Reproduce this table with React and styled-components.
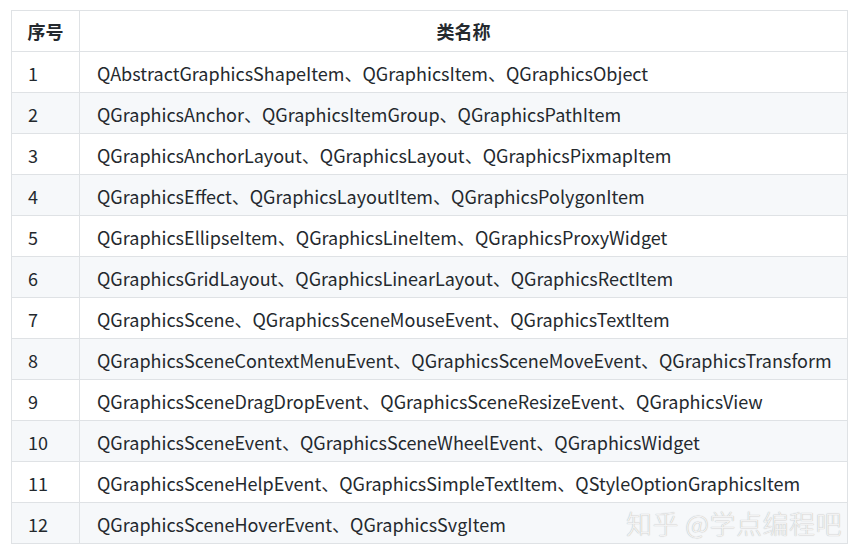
import React from "react";
import styled, { createGlobalStyle } from "styled-components";

const Global = createGlobalStyle`
  html, body { margin: 0; padding: 0; background: #fff; }
  body { font-family: "Noto Sans CJK SC", "Noto Sans", sans-serif; }
`;

const Page = styled.div`
  position: relative;
  width: 864px;
  height: 555px;
  padding: 10px 16px 0 11px;
  box-sizing: border-box;
`;

const Table = styled.table`
  border-collapse: collapse;
  table-layout: fixed;
  width: 837px;
  color: #24292e;
  font-size: 18px;
`;

const Col = styled.col`
  width: ${(p) => p.$w};
`;

const Th = styled.th`
  height: 41px;
  box-sizing: border-box;
  border: 1px solid #dfe2e5;
  font-weight: 700;
  text-align: center;
  padding: 0;
  white-space: nowrap;
`;

const Row = styled.tr`
  background: ${(p) => (p.$alt ? "#f6f8fa" : "#fff")};
`;

const Td = styled.td`
  height: 41px;
  box-sizing: border-box;
  border: 1px solid #dfe2e5;
  padding: 1px 0 0 ${(p) => (p.$num ? "16px" : "17px")};
  white-space: nowrap;
  overflow: visible;
`;

const Watermark = styled.div`
  position: absolute;
  right: 22px;
  bottom: 14px;
  font-size: 26px;
  font-weight: 300;
  letter-spacing: 0.5px;
  color: #f2f2f2;
  font-family: "Noto Sans CJK SC", sans-serif;
  text-shadow: 0 0 1px #a8a8a8;
`;

const rows = [
  "QAbstractGraphicsShapeItem、QGraphicsItem、QGraphicsObject",
  "QGraphicsAnchor、QGraphicsItemGroup、QGraphicsPathItem",
  "QGraphicsAnchorLayout、QGraphicsLayout、QGraphicsPixmapItem",
  "QGraphicsEffect、QGraphicsLayoutItem、QGraphicsPolygonItem",
  "QGraphicsEllipseItem、QGraphicsLineItem、QGraphicsProxyWidget",
  "QGraphicsGridLayout、QGraphicsLinearLayout、QGraphicsRectItem",
  "QGraphicsScene、QGraphicsSceneMouseEvent、QGraphicsTextItem",
  "QGraphicsSceneContextMenuEvent、QGraphicsSceneMoveEvent、QGraphicsTransform",
  "QGraphicsSceneDragDropEvent、QGraphicsSceneResizeEvent、QGraphicsView",
  "QGraphicsSceneEvent、QGraphicsSceneWheelEvent、QGraphicsWidget",
  "QGraphicsSceneHelpEvent、QGraphicsSimpleTextItem、QStyleOptionGraphicsItem",
  "QGraphicsSceneHoverEvent、QGraphicsSvgItem",
];

export default function App() {
  return (
    <Page>
      <Global />
      <Table>
        <colgroup>
          <Col $w="68px" />
          <Col $w="768px" />
        </colgroup>
        <thead>
          <tr>
            <Th>序号</Th>
            <Th>类名称</Th>
          </tr>
        </thead>
        <tbody>
          {rows.map((r, i) => (
            <Row key={i} $alt={i % 2 === 1}>
              <Td $num>{i + 1}</Td>
              <Td>{r}</Td>
            </Row>
          ))}
        </tbody>
      </Table>
      <Watermark>知乎 @学点编程吧</Watermark>
    </Page>
  );
}
